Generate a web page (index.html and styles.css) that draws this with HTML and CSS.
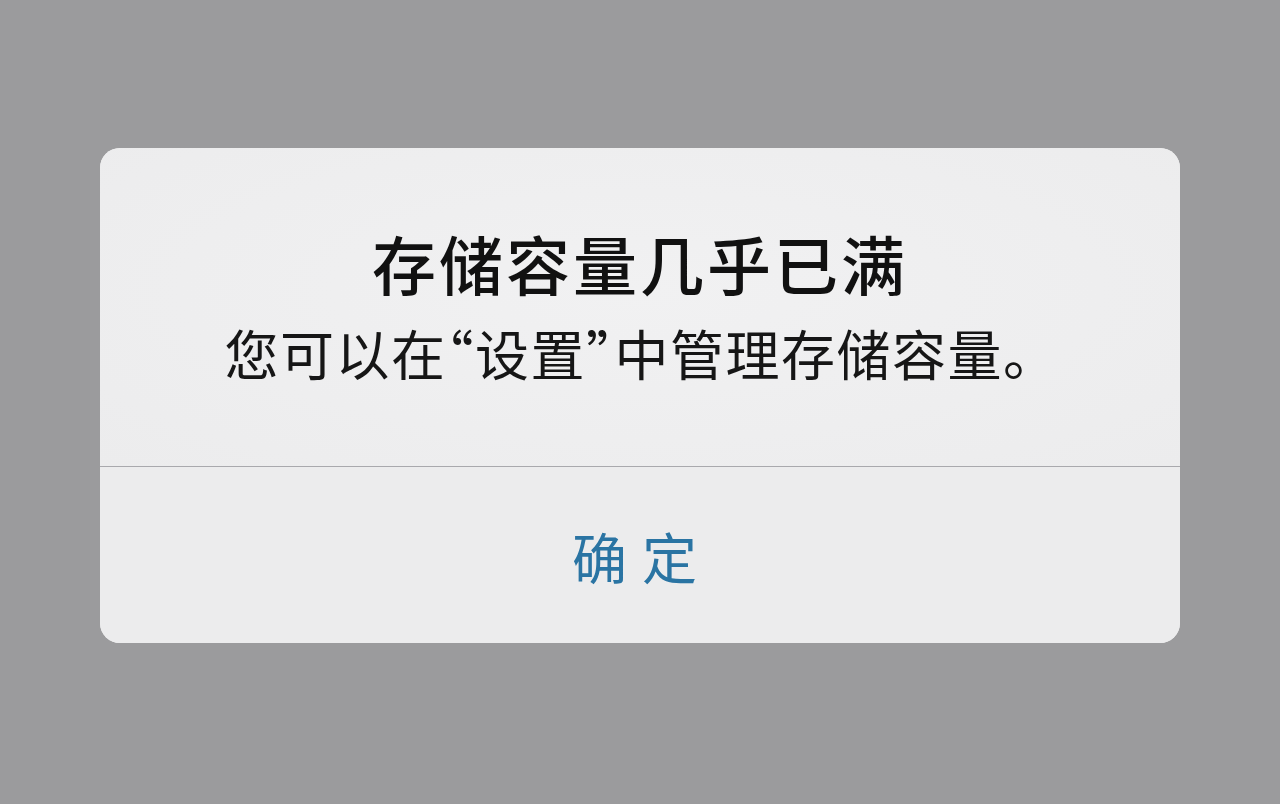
FILE: index.html
```html
<!DOCTYPE html>
<html lang="zh-CN">
<head>
    <meta charset="UTF-8">
    <meta name="viewport" content="width=device-width, initial-scale=1.0">
    <title>存储容量几乎已满</title>
    <link rel="stylesheet" href="styles.css">
</head>
<body>
    <div class="alert">
        <div class="alert-body">
            <h2 class="alert-title">存储容量几乎已满</h2>
            <p class="alert-message">您可以在“设置”中管理存储容量。</p>
        </div>
        <button class="alert-button">确定</button>
    </div>
</body>
</html>
```

FILE: styles.css
```css
body {
    margin: 0;
    min-height: 804px;
    background: #9b9b9d;
    font-family: "Noto Sans CJK SC", "Noto Sans", sans-serif;
    display: flex;
    justify-content: center;
    align-items: flex-start;
    padding-top: 148px;
    box-sizing: border-box;
}
.alert {
    width: 1080px;
    background: #ededee;
    border-radius: 20px;
    overflow: hidden;
    display: flex;
    flex-direction: column;
}
.alert-body {
    height: 319px;
    box-sizing: border-box;
    padding-top: 76px;
    text-align: center;
    border-bottom: 1px solid #a9a9ad;
    background: radial-gradient(ellipse at 50% 45%, #f1f1f2 0%, #ececed 100%);
}
.alert-title {
    margin: 0;
    font-size: 64px;
    line-height: 77px;
    font-weight: 500;
    letter-spacing: 3px;
    color: #111;
}
/* half-width quotes, like the system alert font */
.alert-message {
    margin: 18px 0 0;
    padding-right: 24px;
    font-size: 54px;
    line-height: 68px;
    font-weight: 400;
    letter-spacing: 1.5px;
    font-feature-settings: "halt";
    color: #161616;
}
.alert-button {
    height: 176px;
    border: none;
    background: #ececed;
    font-family: inherit;
    font-size: 55px;
    color: #2a74a3;
    letter-spacing: 15px;
    padding: 0 0 0 4px;
}
```
